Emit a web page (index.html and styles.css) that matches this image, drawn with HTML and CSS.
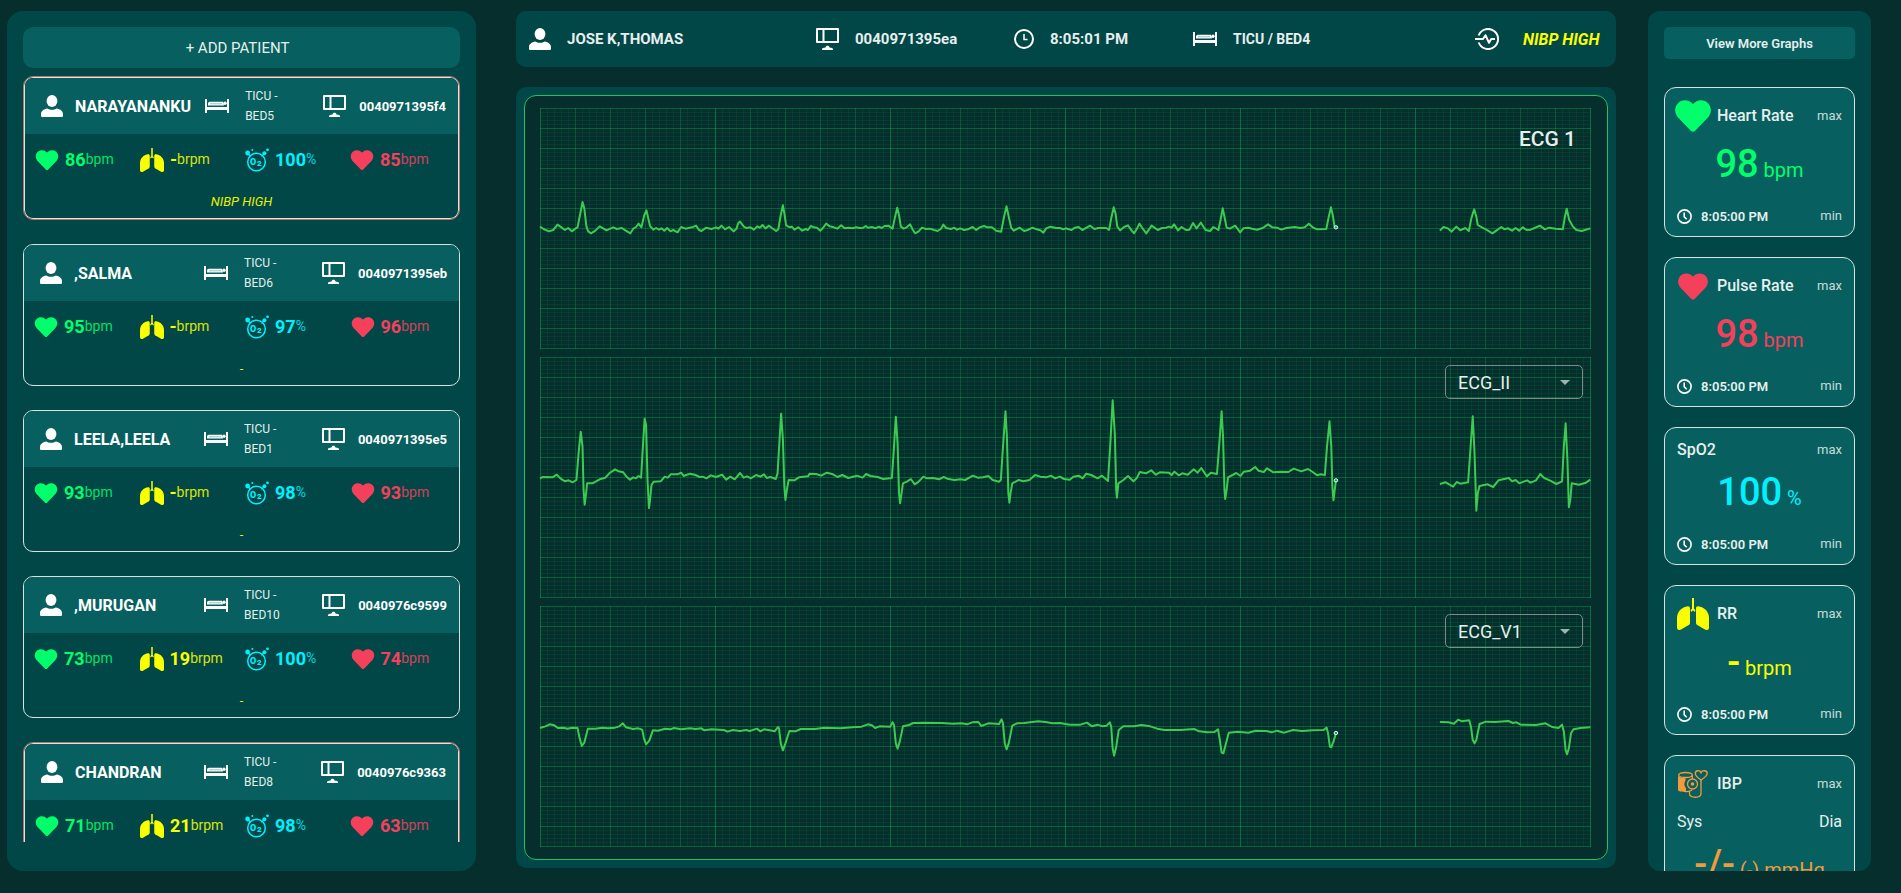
FILE: index.html
```html
<!DOCTYPE html>
<html lang="en">
<head>
  <meta charset="UTF-8">
  <meta name="viewport" content="width=device-width, initial-scale=1.0">
  <title>Patient Monitor</title>
  <link rel="stylesheet" href="styles.css">
</head>
<body>

  <!-- icons -->
  <svg class="icon-defs" aria-hidden="true">
    <symbol id="person" viewBox="0 0 22 22">
      <ellipse cx="11" cy="6" rx="5.4" ry="6"/>
      <path d="M0 19c0-3 2.600-5 6.300-5.600 1.200.9 2.900 1.400 4.700 1.400s3.500-.5 4.700-1.400C19.400 14 22 16 22 19v1.500c0 1-.6 1.500-1.500 1.500h-19C.6 22 0 21.500 0 20.500z"/>
    </symbol>
    <symbol id="monitor" viewBox="0 0 23 22">
      <path d="M1 1h21v13H1zM7.500 1v13" fill="none" stroke="currentColor" stroke-width="2" stroke-linejoin="round"/>
      <path d="M6 22v-1c0-.8 1.500-1.300 3.500-1.500.3-1.200 1-1.800 2-1.800s1.700.6 2 1.800c2 .2 3.500.7 3.500 1.500v1z"/>
    </symbol>
    <symbol id="bed" viewBox="0 0 24 14">
      <path d="M0 0h2v8h20V0h2v14h-2v-3H2v3H0z"/>
      <path d="M3 6.500V4.800C3 3.500 3.600 2.800 5 2.800h13l1 3.700z"/>
      <path d="M5 4.800h12" stroke="#7fb0af" stroke-width=".8"/>
      <circle cx="20" cy="4.300" r="1.700"/>
    </symbol>
    <symbol id="clock" viewBox="0 0 20 20">
      <circle cx="10" cy="10" r="9" fill="none" stroke="currentColor" stroke-width="2"/>
      <path d="M10 5v5.500h3.500" fill="none" stroke="currentColor" stroke-width="1.500"/>
    </symbol>
    <symbol id="clock-small" viewBox="0 0 15 15">
      <circle cx="7.500" cy="7.500" r="6.600" fill="none" stroke="currentColor" stroke-width="1.600"/>
      <path d="M7.200 3.500v4.200l2.500 2.500" fill="none" stroke="currentColor" stroke-width="1.600"/>
    </symbol>
    <symbol id="pulse" viewBox="0 0 24 22">
      <path d="M3.700 7.500A10 10 0 1 1 3.700 14.500" fill="none" stroke="currentColor" stroke-width="2"/>
      <path d="M0 11h8l2.500-3.800 3.500 7.600 2.200-3.800H20" fill="none" stroke="currentColor" stroke-width="2" stroke-linejoin="round"/>
    </symbol>
    <symbol id="heart" viewBox="1.900 2.900 20.200 17.800">
      <path d="M10.900 20.200 3.600 12.600C1.400 10.200 1.500 6.600 3.600 4.600 6 2.300 9.800 2.500 12 5.200c2.200-2.700 6-2.900 8.400-.6 2.100 2 2.200 5.600 0 8l-7.300 7.600c-.6.6-1.600.6-2.200 0z"/>
    </symbol>
    <symbol id="lungs" viewBox="0 0 32 32">
      <path d="M15 0h2v10.500l1.500 2-.9 1.500-1.600-1.800-1.600 1.800-.9-1.500 1.500-2z"/>
      <path d="M11 8.300c1.200 0 2 .8 2 2V25c0 .9-.4 1.500-1.200 2L4 31.600c-2 1-4 .2-4-2V20C0 14 4.500 9 11 8.300z"/>
      <path d="M21 8.300c-1.200 0-2 .8-2 2V25c0 .9.400 1.500 1.200 2l7.800 4.600c2 1 4 .2 4-2V20c0-6-4.500-11-11-11.700z"/>
    </symbol>
    <symbol id="oxygen" viewBox="0 0 24 24">
      <circle cx="11.500" cy="14" r="8.800" fill="none" stroke="currentColor" stroke-width="1.500"/>
      <circle cx="2.600" cy="5" r="2.400"/>
      <circle cx="7.300" cy="2" r="1"/>
      <circle cx="19.400" cy="5.300" r="2"/>
      <circle cx="22.500" cy="1.800" r="1.400"/>
      <path d="m19.400 5.300-3 3M2.600 5l3 3.500" stroke="currentColor" stroke-width="1.200"/>
      <text x="5" y="17" font-size="9" font-weight="900">O</text>
      <text x="12" y="18" font-size="8" font-weight="900">2</text>
    </symbol>
    <symbol id="cuff" viewBox="0 0 30 28">
      <g fill="none" stroke="currentColor" stroke-width="1.300">
        <ellipse cx="7.500" cy="5" rx="6.800" ry="2.500"/>
        <path d="M14.300 5v4M7 21.500c3 .3 5.500-.2 7-1.500"/>
        <circle cx="14.500" cy="14" r="5"/>
        <path d="M11.500 21.500v2c0 5 11.500 5 11.500 0V10"/>
        <path d="M23 10c-3-2-5.700-4-5.700-6.500 0-3.300 4.500-3.800 5.700-.7 1.200-3.100 6.200-2.600 6.200.7C29.200 6 26 8 23 10z"/>
      </g>
      <path d="M0 6c1.200 1.300 3.800 2 7.500 2v2.500c-1.600 2.500-1.600 5 .5 7.500v4c-4 0-8-.7-8-2z"/>
      <circle cx="14.500" cy="14" r="1.800"/>
    </symbol>
  </svg>

  <div class="dashboard">

    <aside class="patients">
      <button class="add-patient" type="button">+ ADD PATIENT</button>

      <div class="patient-list">
        <article class="patient alarm">
          <header class="patient-head">
            <div class="patient-name"><svg class="i-person"><use href="#person"/></svg><span>NARAYANANKU</span></div>
            <div class="patient-bed"><svg class="i-bed"><use href="#bed"/></svg><span>TICU -<br>BED5</span></div>
            <div class="patient-id"><svg class="i-monitor"><use href="#monitor"/></svg><span>0040971395f4</span></div>
          </header>
          <div class="readings">
            <div class="reading green"><svg><use href="#heart"/></svg><b>86</b><span>bpm</span></div>
            <div class="reading yellow"><svg class="tall"><use href="#lungs"/></svg><b>-</b><span>brpm</span></div>
            <div class="reading cyan"><svg class="tall"><use href="#oxygen"/></svg><b>100</b><span>%</span></div>
            <div class="reading red"><svg><use href="#heart"/></svg><b>85</b><span>bpm</span></div>
          </div>
          <p class="patient-alert">NIBP HIGH</p>
        </article>

        <article class="patient">
          <header class="patient-head">
            <div class="patient-name"><svg class="i-person"><use href="#person"/></svg><span>,SALMA</span></div>
            <div class="patient-bed"><svg class="i-bed"><use href="#bed"/></svg><span>TICU -<br>BED6</span></div>
            <div class="patient-id"><svg class="i-monitor"><use href="#monitor"/></svg><span>0040971395eb</span></div>
          </header>
          <div class="readings">
            <div class="reading green"><svg><use href="#heart"/></svg><b>95</b><span>bpm</span></div>
            <div class="reading yellow"><svg class="tall"><use href="#lungs"/></svg><b>-</b><span>brpm</span></div>
            <div class="reading cyan"><svg class="tall"><use href="#oxygen"/></svg><b>97</b><span>%</span></div>
            <div class="reading red"><svg><use href="#heart"/></svg><b>96</b><span>bpm</span></div>
          </div>
          <p class="patient-alert">-</p>
        </article>

        <article class="patient">
          <header class="patient-head">
            <div class="patient-name"><svg class="i-person"><use href="#person"/></svg><span>LEELA,LEELA</span></div>
            <div class="patient-bed"><svg class="i-bed"><use href="#bed"/></svg><span>TICU -<br>BED1</span></div>
            <div class="patient-id"><svg class="i-monitor"><use href="#monitor"/></svg><span>0040971395e5</span></div>
          </header>
          <div class="readings">
            <div class="reading green"><svg><use href="#heart"/></svg><b>93</b><span>bpm</span></div>
            <div class="reading yellow"><svg class="tall"><use href="#lungs"/></svg><b>-</b><span>brpm</span></div>
            <div class="reading cyan"><svg class="tall"><use href="#oxygen"/></svg><b>98</b><span>%</span></div>
            <div class="reading red"><svg><use href="#heart"/></svg><b>93</b><span>bpm</span></div>
          </div>
          <p class="patient-alert">-</p>
        </article>

        <article class="patient">
          <header class="patient-head">
            <div class="patient-name"><svg class="i-person"><use href="#person"/></svg><span>,MURUGAN</span></div>
            <div class="patient-bed"><svg class="i-bed"><use href="#bed"/></svg><span>TICU -<br>BED10</span></div>
            <div class="patient-id"><svg class="i-monitor"><use href="#monitor"/></svg><span>0040976c9599</span></div>
          </header>
          <div class="readings">
            <div class="reading green"><svg><use href="#heart"/></svg><b>73</b><span>bpm</span></div>
            <div class="reading yellow"><svg class="tall"><use href="#lungs"/></svg><b>19</b><span>brpm</span></div>
            <div class="reading cyan"><svg class="tall"><use href="#oxygen"/></svg><b>100</b><span>%</span></div>
            <div class="reading red"><svg><use href="#heart"/></svg><b>74</b><span>bpm</span></div>
          </div>
          <p class="patient-alert">-</p>
        </article>

        <article class="patient alarm">
          <header class="patient-head">
            <div class="patient-name"><svg class="i-person"><use href="#person"/></svg><span>CHANDRAN</span></div>
            <div class="patient-bed"><svg class="i-bed"><use href="#bed"/></svg><span>TICU -<br>BED8</span></div>
            <div class="patient-id"><svg class="i-monitor"><use href="#monitor"/></svg><span>0040976c9363</span></div>
          </header>
          <div class="readings">
            <div class="reading green"><svg><use href="#heart"/></svg><b>71</b><span>bpm</span></div>
            <div class="reading yellow"><svg class="tall"><use href="#lungs"/></svg><b>21</b><span>brpm</span></div>
            <div class="reading cyan"><svg class="tall"><use href="#oxygen"/></svg><b>98</b><span>%</span></div>
            <div class="reading red"><svg><use href="#heart"/></svg><b>63</b><span>bpm</span></div>
          </div>
        </article>
      </div>
    </aside>

    <main class="monitor">
      <header class="monitor-head">
        <div class="info"><svg class="i-person"><use href="#person"/></svg><span>JOSE K,THOMAS</span></div>
        <div class="info"><svg class="i-monitor"><use href="#monitor"/></svg><span>0040971395ea</span></div>
        <div class="info"><svg class="i-clock"><use href="#clock"/></svg><span>8:05:01 PM</span></div>
        <div class="info bed-info"><svg class="i-bed"><use href="#bed"/></svg><span>TICU / BED4</span></div>
        <div class="info alert-info"><svg class="i-pulse"><use href="#pulse"/></svg><span>NIBP HIGH</span></div>
      </header>

      <section class="charts">
        <div class="charts-inner">
          <div class="chart">
            <svg viewBox="85 324 2942 723" preserveAspectRatio="none">
              <polyline points="85,680 95,687 110,694 122,690 134,674 145,682 155,690 164,684 174,694 184,686 190,682 197,645 204,606 209,625 215,680 220,694 228,700 240,692 252,679 262,685 271,691 290,682 300,687 314,684 325,692 338,700 346,686 354,681 361,671 369,682 377,645 383,631 387,650 393,678 402,689 410,684 418,689 425,685 433,692 441,684 450,694 458,690 470,697 480,681 492,686 510,682 522,677 530,690 537,693 550,683 565,687 578,682 584,686 593,677 603,688 614,681 627,694 635,686 640,669 645,665 655,679 662,684 674,682 684,689 693,679 700,683 708,675 716,685 726,677 734,684 746,693 752,688 759,645 765,616 769,640 774,676 782,681 790,680 797,689 808,682 819,692 829,687 835,690 843,678 852,682 860,683 870,692 877,684 886,671 896,679 905,681 917,686 928,676 938,685 950,683 960,685 970,682 980,684 990,683 997,678 1003,683 1014,681 1024,685 1033,680 1041,684 1050,678 1060,677 1072,686 1079,650 1085,623 1090,645 1095,680 1103,686 1110,683 1121,673 1129,690 1135,700 1145,694 1154,683 1165,687 1176,686 1188,690 1198,693 1207,687 1214,674 1222,684 1235,687 1245,683 1252,689 1261,685 1272,690 1283,688 1296,681 1306,690 1316,682 1328,678 1338,682 1350,682 1362,692 1376,695 1384,650 1391,619 1397,650 1404,683 1411,692 1420,687 1428,683 1440,693 1450,690 1464,683 1475,688 1486,691 1494,698 1502,685 1514,680 1530,684 1540,684 1550,688 1556,685 1573,690 1582,683 1593,681 1603,690 1625,677 1637,687 1648,684 1670,684 1678,690 1684,655 1691,622 1696,640 1701,680 1709,691 1720,681 1731,676 1740,690 1748,700 1755,688 1763,671 1771,684 1782,700 1790,688 1797,677 1805,683 1814,690 1826,684 1838,683 1846,680 1853,683 1860,673 1871,691 1881,681 1893,690 1903,689 1913,669 1923,685 1935,668 1948,690 1961,693 1970,681 1984,690 1990,660 1996,625 2001,650 2007,683 2016,686 2031,677 2045,697 2054,685 2068,683 2078,686 2092,689 2108,684 2123,673 2135,682 2148,683 2160,689 2174,684 2198,681 2213,684 2226,682 2237,671 2248,682 2260,688 2286,687 2293,650 2299,622 2304,645 2309,680 2313,681"/>
              <polyline points="2604,692 2614,681 2626,685 2637,695 2650,680 2661,691 2675,684 2685,693 2692,655 2700,628 2706,650 2710,675 2723,683 2733,688 2751,700 2763,691 2776,681 2785,688 2795,685 2806,692 2816,684 2826,692 2836,682 2847,690 2858,689 2869,684 2884,677 2898,688 2910,683 2928,686 2948,688 2954,650 2959,626 2966,660 2976,679 2986,690 3001,693 3025,685"/>
              <ellipse cx="2313" cy="682" rx="5" ry="5"/>
            </svg>
            <h2 class="chart-title">ECG 1</h2>
          </div>

          <div class="chart">
            <svg viewBox="85 -39 2942 723" preserveAspectRatio="none">
              <polyline points="85,326 92,321 120,322 132,314 142,325 155,334 165,331 176,337 187,330 193,250 199,185 204,230 207,360 210,404 213,380 217,340 232,340 252,328 268,323 280,309 295,298 305,304 318,307 328,321 337,329 346,322 354,325 361,318 368,323 373,230 378,146 382,165 386,330 390,414 393,390 397,345 403,335 423,334 434,320 443,323 451,313 470,313 480,308 487,318 505,311 520,315 532,321 540,320 551,325 563,316 578,321 595,314 606,329 618,320 630,328 645,309 655,323 665,319 675,325 690,315 702,320 712,313 720,324 730,321 745,327 750,310 755,220 760,131 765,210 769,350 772,390 776,360 781,330 797,331 810,322 835,319 840,311 858,312 872,317 888,308 905,313 918,321 931,315 948,324 972,317 988,323 998,312 1010,318 1030,321 1046,327 1070,324 1076,230 1081,140 1086,220 1090,370 1093,400 1097,370 1101,340 1112,335 1123,327 1134,343 1145,335 1158,320 1168,325 1185,324 1202,328 1215,321 1225,326 1245,330 1262,328 1275,330 1297,317 1310,323 1325,322 1340,318 1352,330 1370,335 1375,330 1381,230 1388,124 1392,200 1396,370 1399,398 1402,370 1407,340 1425,330 1438,334 1455,330 1471,315 1485,320 1502,322 1515,317 1527,325 1540,320 1552,327 1568,329 1578,320 1593,317 1604,325 1614,311 1628,315 1646,325 1658,317 1675,333 1681,230 1688,91 1694,190 1698,360 1700,383 1704,340 1718,330 1731,318 1746,334 1755,325 1764,306 1781,310 1796,301 1809,314 1820,307 1846,308 1853,315 1861,305 1873,316 1883,310 1898,314 1915,298 1926,308 1936,294 1952,319 1963,308 1980,312 1986,230 1993,124 1997,200 2001,360 2003,387 2007,360 2011,322 2034,309 2046,318 2055,305 2073,302 2087,291 2096,302 2111,306 2120,295 2138,307 2158,305 2180,306 2195,296 2216,304 2235,297 2248,306 2260,316 2270,313 2282,315 2288,230 2295,154 2300,230 2303,350 2306,391 2313,331"/>
              <polyline points="2604,342 2620,337 2641,350 2651,336 2661,341 2683,337 2690,230 2696,139 2701,250 2706,422 2710,370 2715,348 2738,343 2753,351 2768,331 2797,324 2806,334 2816,330 2826,340 2848,331 2858,338 2873,331 2885,312 2896,324 2913,332 2930,342 2946,334 2951,230 2956,160 2961,270 2965,412 2969,390 2973,340 2993,344 3013,338 3025,329"/>
              <ellipse cx="2313" cy="331" rx="5" ry="5"/>
            </svg>
            <div class="lead">
              <select aria-label="Second lead">
                <option>ECG_I</option>
                <option selected>ECG_II</option>
                <option>ECG_V1</option>
              </select>
            </div>
          </div>

          <div class="chart">
            <svg viewBox="85 708 2942 723" preserveAspectRatio="none">
              <polyline points="85,1074 100,1069 112,1063 125,1066 135,1074 150,1073 162,1076 175,1073 190,1074 196,1105 202,1128 209,1118 219,1076 240,1076 260,1073 275,1075 295,1073 307,1069 317,1060 326,1072 345,1077 360,1075 371,1079 376,1105 382,1123 391,1112 401,1081 415,1082 435,1076 450,1078 460,1074 480,1078 505,1075 520,1077 537,1075 545,1081 565,1078 600,1080 610,1085 625,1080 645,1083 662,1080 672,1083 692,1076 702,1084 712,1078 728,1081 742,1084 751,1071 754,1075 759,1120 765,1141 772,1120 783,1083 800,1084 815,1077 855,1077 880,1073 925,1075 960,1072 985,1070 1003,1063 1014,1066 1023,1074 1035,1069 1065,1070 1072,1057 1076,1065 1081,1120 1086,1136 1092,1115 1101,1069 1118,1065 1130,1059 1160,1058 1210,1059 1240,1061 1265,1060 1280,1063 1295,1057 1312,1056 1320,1068 1340,1060 1370,1062 1377,1048 1381,1060 1386,1120 1391,1138 1397,1120 1407,1067 1420,1060 1440,1059 1480,1054 1500,1056 1520,1060 1540,1059 1568,1064 1598,1064 1616,1058 1630,1069 1646,1064 1660,1069 1671,1067 1680,1057 1684,1070 1688,1135 1692,1157 1698,1130 1705,1080 1718,1069 1748,1069 1768,1065 1793,1069 1813,1076 1833,1080 1878,1080 1916,1077 1930,1084 1953,1087 1973,1086 1983,1078 1988,1110 1993,1148 1998,1150 2004,1125 2013,1088 2038,1085 2068,1088 2088,1082 2118,1083 2133,1087 2148,1082 2168,1088 2193,1080 2218,1083 2248,1081 2278,1080 2287,1073 2291,1090 2296,1130 2300,1132 2306,1115 2313,1090"/>
              <polyline points="2604,1056 2628,1057 2643,1061 2655,1049 2666,1054 2686,1051 2691,1070 2696,1110 2701,1120 2706,1110 2715,1062 2733,1055 2758,1056 2796,1053 2808,1059 2818,1057 2830,1064 2873,1065 2900,1060 2918,1071 2936,1074 2946,1064 2951,1085 2956,1140 2960,1153 2965,1135 2971,1090 2978,1078 2998,1074 3025,1072"/>
              <ellipse cx="2313" cy="1089" rx="5" ry="5"/>
            </svg>
            <div class="lead">
              <select aria-label="Third lead">
                <option>ECG_I</option>
                <option>ECG_II</option>
                <option selected>ECG_V1</option>
              </select>
            </div>
          </div>
        </div>
      </section>
    </main>

    <aside class="vitals">
      <button class="more-graphs" type="button">View More Graphs</button>

      <article class="vital green">
        <header class="vital-head">
          <span class="vital-icon"><svg class="heart-large"><use href="#heart"/></svg></span>
          <h3>Heart Rate</h3>
          <span class="limit">max</span>
        </header>
        <p class="value"><b>98</b> bpm</p>
        <footer class="vital-foot"><svg><use href="#clock-small"/></svg><time>8:05:00 PM</time><span class="limit">min</span></footer>
      </article>

      <article class="vital red">
        <header class="vital-head">
          <span class="vital-icon"><svg class="heart-medium"><use href="#heart"/></svg></span>
          <h3>Pulse Rate</h3>
          <span class="limit">max</span>
        </header>
        <p class="value"><b>98</b> bpm</p>
        <footer class="vital-foot"><svg><use href="#clock-small"/></svg><time>8:05:00 PM</time><span class="limit">min</span></footer>
      </article>

      <article class="vital cyan">
        <header class="vital-head">
          <h3>SpO2</h3>
          <span class="limit">max</span>
        </header>
        <p class="value"><b>100</b> %</p>
        <footer class="vital-foot"><svg><use href="#clock-small"/></svg><time>8:05:00 PM</time><span class="limit">min</span></footer>
      </article>

      <article class="vital yellow">
        <header class="vital-head">
          <span class="vital-icon"><svg class="lungs-large"><use href="#lungs"/></svg></span>
          <h3>RR</h3>
          <span class="limit">max</span>
        </header>
        <p class="value"><b>-</b> brpm</p>
        <footer class="vital-foot"><svg><use href="#clock-small"/></svg><time>8:05:00 PM</time><span class="limit">min</span></footer>
      </article>

      <article class="vital orange">
        <header class="vital-head">
          <span class="vital-icon"><svg class="cuff"><use href="#cuff"/></svg></span>
          <h3>IBP</h3>
          <span class="limit">max</span>
        </header>
        <div class="pressure"><span>Sys</span><span>Dia</span></div>
        <p class="value"><b>-/-</b> (-) mmHg</p>
      </article>
    </aside>

  </div>

</body>
</html>
```
FILE: styles.css
```css
* {
  box-sizing: border-box;
}
body {
  margin: 0;
  background: #052e2d;
  color: #e6efee;
  font-family: Roboto, "Liberation Sans", sans-serif;
  overflow: hidden;
}
button, select {
  font-family: inherit;
  color: inherit;
}
svg {
  fill: currentColor;
  flex-shrink: 0;
  overflow: visible;
}
h2, h3, p {
  margin: 0;
}
.icon-defs {
  position: absolute;
  width: 0;
  height: 0;
}

.green { color: #00ff6a; }
.yellow { color: #faff00; }
.cyan { color: #00f0ff; }
.red { color: #f5405c; }
.orange { color: #f39a3c; }

.i-person { width: 22px; height: 22px; }
.i-monitor { width: 23px; height: 22px; }
.i-bed { width: 24px; height: 14px; }
.i-clock { width: 20px; height: 20px; }
.i-pulse { width: 24px; height: 22px; }

.dashboard {
  display: grid;
  grid-template-columns: 477fr 1100fr 223fr;
  column-gap: 32px;
  height: 100vh;
  padding: 11px 30px 22px 7px;
}

/* left: patients */
.patients {
  display: flex;
  flex-direction: column;
  min-height: 0;
  margin-right: 8px;
  padding: 16px 16px 29px;
  background: #014747;
  border-radius: 16px;
}
.add-patient {
  flex-shrink: 0;
  height: 41px;
  margin-bottom: 8px;
  padding: 0 16px 0 8px;
  border: none;
  border-radius: 10px;
  background: #075f5f;
  font-size: 15px;
}
.patient-list {
  display: flex;
  flex-direction: column;
  gap: 24px;
  flex: 1;
  min-height: 0;
  overflow-y: auto;
  scrollbar-width: none;
}
.patient {
  flex-shrink: 0;
  border: 1px solid #d9e2e1;
  border-radius: 10px;
  overflow: hidden;
}
.patient.alarm {
  border-color: #b8746d;
  box-shadow: inset 0 0 0 1px #e8e0de;
  padding: 1px;
}
.patient-head {
  display: flex;
  align-items: center;
  justify-content: space-between;
  height: 56px;
  padding: 0 12px 0 16px;
  background: #075f5f;
  color: #fff;
}
.patient.alarm .patient-head {
  border-radius: 8px 8px 0 0;
}
.patient-name, .patient-bed, .patient-id {
  display: flex;
  align-items: center;
}
.patient-name {
  gap: 12px;
  width: 150px;
  font-size: 16px;
  font-weight: 700;
}
.patient-bed {
  gap: 16px;
  width: 104px;
  font-size: 12px;
  line-height: 20px;
  color: #e6efee;
}
.patient-bed svg {
  color: #fff;
}
.patient-id {
  gap: 13px;
  font-size: 13px;
  font-weight: 700;
}
.readings {
  display: grid;
  grid-template-columns: repeat(4, 1fr);
  align-items: center;
  height: 52px;
  padding: 0 3px 0 10px;
}
.reading {
  display: flex;
  align-items: center;
}
.reading svg {
  width: 24px;
  height: 20px;
  margin-right: 6px;
}
.reading .tall {
  height: 24px;
}
.reading b {
  font-size: 18px;
  line-height: 20px;
}
.reading span {
  font-size: 14px;
  line-height: 16px;
  padding-bottom: 2px;
  opacity: 0.85;
}
.patient-alert {
  height: 32px;
  font-size: 13px;
  line-height: 32px;
  font-style: italic;
  text-align: center;
  color: #e8f000;
}

/* middle: selected patient */
.monitor {
  min-width: 0;
}
.monitor-head {
  display: grid;
  grid-template-columns: 287fr 198fr 179fr 282fr 126fr;
  align-items: center;
  height: 56px;
  margin-bottom: 20px;
  padding: 0 15px 0 13px;
  background: #014747;
  border-radius: 10px;
}
.info {
  display: flex;
  align-items: center;
  gap: 16px;
  font-size: 15px;
  font-weight: 700;
  white-space: nowrap;
}
.info svg {
  color: #fff;
}
.bed-info {
  font-size: 14px;
}
.alert-info {
  gap: 24px;
  font-size: 16px;
  font-style: italic;
  color: #faff00;
}
.charts {
  padding: 8px;
  background: #014747;
  border-radius: 10px;
}
.charts-inner {
  display: flex;
  flex-direction: column;
  gap: 8px;
  padding: 12px 16px 12px 15px;
  border: 1px solid #22c35d;
  border-radius: 12px;
  background: #052e2d;
}
.chart {
  position: relative;
  height: 241px;
  background:
    repeating-linear-gradient(90deg, rgba(0, 200, 80, 0.2) 0 1px, transparent 1px 175px),
    repeating-linear-gradient(90deg, rgba(0, 200, 80, 0.2) 0 1px, transparent 1px 35px),
    repeating-linear-gradient(rgba(0, 200, 80, 0.27) 0 1px, transparent 1px 20px),
    repeating-linear-gradient(90deg, rgba(0, 200, 80, 0.09) 0 1px, transparent 1px 7px),
    repeating-linear-gradient(rgba(0, 200, 80, 0.09) 0 1px, transparent 1px 4px);
}
.chart > svg {
  display: block;
  width: 100%;
  height: 100%;
}
.chart polyline {
  fill: none;
  stroke: #3ccb50;
  stroke-width: 2px;
  stroke-linejoin: round;
  vector-effect: non-scaling-stroke;
}
.chart ellipse {
  fill: #0fa86a;
  stroke: #e8fff0;
  stroke-width: 1px;
  vector-effect: non-scaling-stroke;
}
.chart-title {
  position: absolute;
  top: 19px;
  right: 15px;
  font-size: 21px;
  line-height: 24px;
  font-weight: 500;
}
.lead {
  position: absolute;
  top: 8px;
  right: 8px;
}
.lead::after {
  content: "";
  position: absolute;
  top: 15px;
  right: 13px;
  border: 5px solid transparent;
  border-top-color: #9bb5b3;
  border-bottom: none;
  pointer-events: none;
}
.lead select {
  appearance: none;
  display: block;
  width: 138px;
  height: 34px;
  padding: 0 32px 0 12px;
  border: 1px solid #7d8b89;
  border-radius: 5px;
  background: transparent;
  font-size: 18px;
}

/* right: vital signs */
.vitals {
  display: flex;
  flex-direction: column;
  gap: 20px;
  min-height: 0;
  padding: 16px 16px 0;
  background: #014747;
  border-radius: 12px;
  overflow-y: auto;
  scrollbar-width: none;
}
.more-graphs {
  flex-shrink: 0;
  height: 32px;
  margin-bottom: 8px;
  border: none;
  border-radius: 5px;
  background: #075f5f;
  font-size: 13px;
  font-weight: 600;
}
.vital {
  flex-shrink: 0;
  padding: 12px;
  border: 1px solid #d9e2e1;
  border-radius: 12px;
  background: #075f5f;
}
.vital-head, .vital-foot {
  display: flex;
  align-items: center;
  color: #e6efee;
}
.vital-icon {
  display: flex;
  align-items: center;
  justify-content: center;
  width: 32px;
  height: 32px;
  margin-right: 8px;
}
.green .vital-icon { color: #00ff6a; }
.red .vital-icon { color: #f5405c; }
.yellow .vital-icon { color: #faff00; }
.orange .vital-icon { color: #f39a3c; }
.heart-large { width: 36px; height: 32px; }
.heart-medium { width: 30px; height: 27px; }
.lungs-large { width: 32px; height: 32px; }
.cuff { width: 30px; height: 28px; }
.vital h3 {
  font-size: 16px;
  line-height: 20px;
  font-weight: 500;
}
.limit {
  margin-left: auto;
  font-size: 13px;
  line-height: 16px;
  opacity: 0.85;
}
.pressure {
  display: flex;
  justify-content: space-between;
  margin-top: 12px;
  font-size: 16px;
  line-height: 20px;
  color: #e6efee;
}
.value {
  height: 64px;
  margin-bottom: 12px;
  font-size: 20px;
  line-height: 20px;
  text-align: center;
  white-space: nowrap;
}
.value b {
  font-size: 38px;
  line-height: 64px;
  font-weight: 500;
}
.vital-foot {
  height: 16px;
}
.vital-foot svg {
  width: 15px;
  height: 15px;
  margin-right: 9px;
  color: #fff;
}
.vital-foot time {
  font-size: 13px;
  font-weight: 600;
}
```
